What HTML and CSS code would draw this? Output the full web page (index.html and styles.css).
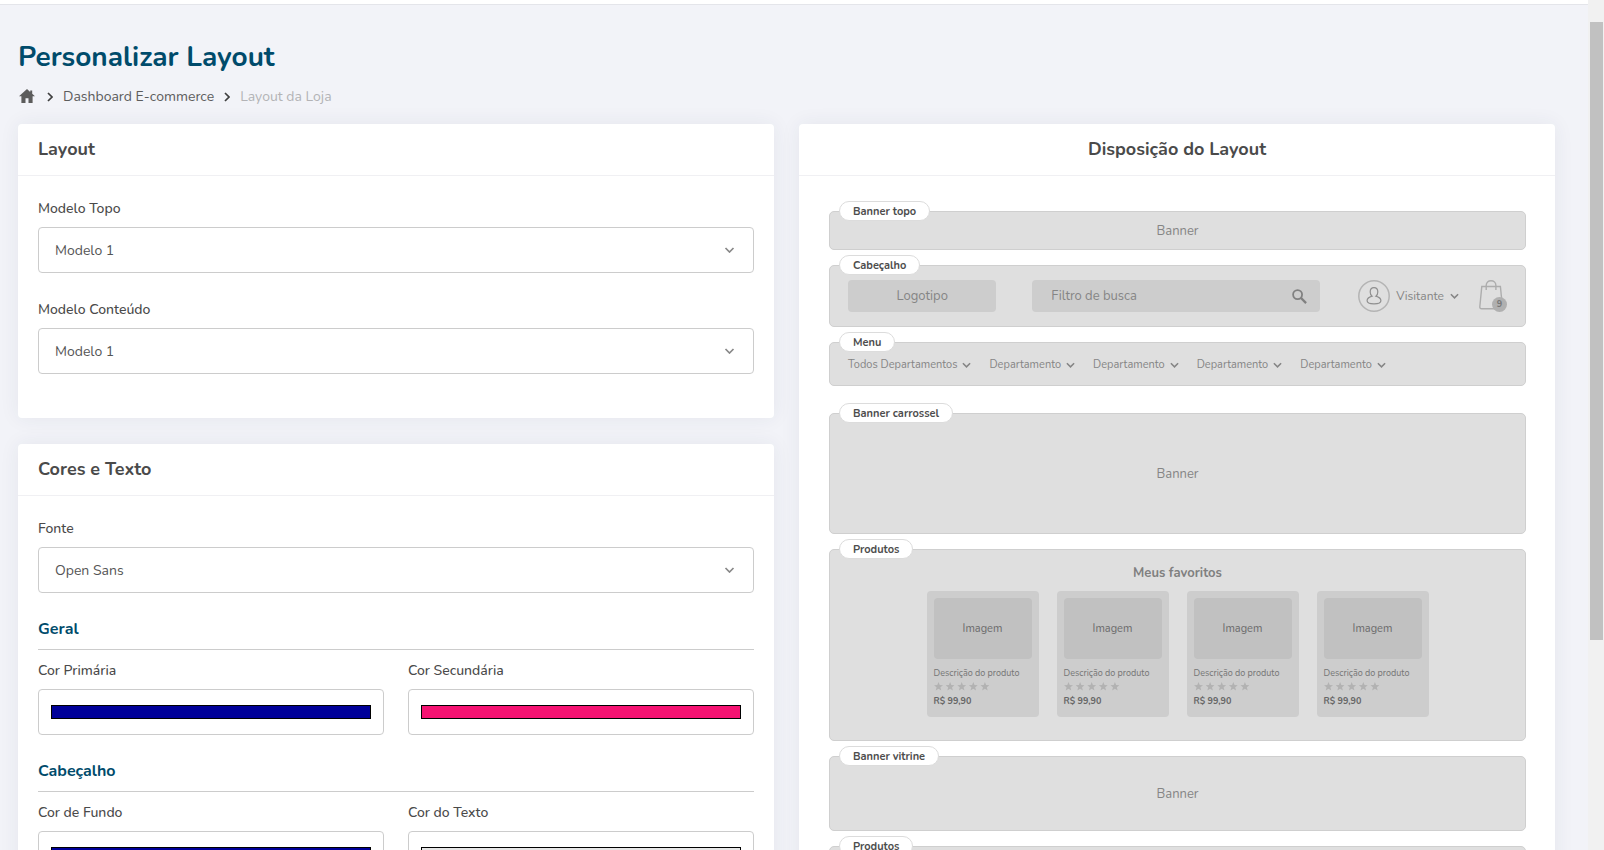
FILE: index.html
```
<!DOCTYPE html>
<html lang="pt-BR">
<head>
<meta charset="utf-8">
<title>Personalizar Layout</title>
<link rel="stylesheet" href="styles.css">
</head>
<body>
<svg class="sprite" aria-hidden="true">
  <symbol id="chevron" viewBox="0 0 10 6"><path d="M1 1l4 4 4-4" fill="none" stroke="currentColor" stroke-width="1.7"/></symbol>
  <symbol id="star" viewBox="0 0 24 24"><path d="M12 0l3.2 8.3 8.800.4-6.900 5.500 2.300 8.600L12 18l-7.400 4.800 2.300-8.600L0 8.700l8.800-.4z" fill="currentColor"/></symbol>
  <symbol id="stars" viewBox="0 0 56 10">
    <use href="#star" x="0" y="0" width="9" height="9"/><use href="#star" x="11.600" y="0" width="9" height="9"/><use href="#star" x="23.200" y="0" width="9" height="9"/><use href="#star" x="34.800" y="0" width="9" height="9"/><use href="#star" x="46.400" y="0" width="9" height="9"/>
  </symbol>
</svg>
<div class="scroll-area">
  <div class="topbar"></div>
  <main class="content">
    <h1 class="page-title">Personalizar Layout</h1>
    <nav class="breadcrumb" aria-label="Navegação">
      <a class="crumb-home" href="#" aria-label="Início"><svg viewBox="0 0 16 14"><path d="M8 0L0 7.200h2.400V14h4.100V9.200h3V14h4.100V7.200H16L13.200 4.700V1.600h-2v1.300z" fill="currentColor"/></svg></a>
      <svg class="crumb-sep" viewBox="0 0 6 10"><path d="M1 1l4 4-4 4" fill="none" stroke="currentColor" stroke-width="1.700"/></svg>
      <a href="#">Dashboard E-commerce</a>
      <svg class="crumb-sep" viewBox="0 0 6 10"><path d="M1 1l4 4-4 4" fill="none" stroke="currentColor" stroke-width="1.700"/></svg>
      <span class="crumb-current">Layout da Loja</span>
    </nav>
    <div class="columns">
      <div class="column">
        <section class="card">
          <h2 class="card-title">Layout</h2>
          <div class="card-body">
            <div class="field">
              <label for="topo">Modelo Topo</label>
              <div class="select-wrap"><select id="topo"><option>Modelo 1</option></select><svg class="select-arrow"><use href="#chevron"/></svg></div>
            </div>
            <div class="field">
              <label for="conteudo">Modelo Conteúdo</label>
              <div class="select-wrap"><select id="conteudo"><option>Modelo 1</option></select><svg class="select-arrow"><use href="#chevron"/></svg></div>
            </div>
          </div>
        </section>
        <section class="card">
          <h2 class="card-title">Cores e Texto</h2>
          <div class="card-body">
            <div class="field">
              <label for="fonte">Fonte</label>
              <div class="select-wrap"><select id="fonte"><option>Open Sans</option></select><svg class="select-arrow"><use href="#chevron"/></svg></div>
            </div>
            <h3 class="group-title">Geral</h3>
            <div class="color-row">
              <div class="field"><label for="c1">Cor Primária</label><input id="c1" type="color" value="#000099"></div>
              <div class="field"><label for="c2">Cor Secundária</label><input id="c2" type="color" value="#f51272"></div>
            </div>
            <h3 class="group-title">Cabeçalho</h3>
            <div class="color-row">
              <div class="field"><label for="c3">Cor de Fundo</label><input id="c3" type="color" value="#000099"></div>
              <div class="field"><label for="c4">Cor do Texto</label><input id="c4" type="color" value="#e6e6e6"></div>
            </div>
          </div>
        </section>
      </div>
      <section class="card preview">
        <h2 class="card-title">Disposição do Layout</h2>
        <div class="blocks">
          <div class="block banner-top"><span class="tag">Banner topo</span>Banner</div>
          <div class="block store-header">
            <span class="tag">Cabeçalho</span>
            <div class="logo-box">Logotipo</div>
            <div class="search-box">Filtro de busca
              <svg class="search-icon" viewBox="0 0 15 15"><circle cx="5.600" cy="5.600" r="4.500" fill="none" stroke="currentColor" stroke-width="1.800"/><path d="M8.900 8.900l5.200 5.200" stroke="currentColor" stroke-width="2.200"/></svg>
            </div>
            <div class="visitor">
              <svg class="avatar" viewBox="0 0 32 32" fill="none"><circle cx="16" cy="16" r="15.200" stroke="#b4b4b4" stroke-width="1.500"/><path d="M16 7.600c2.300 0 3.800 1.900 3.800 4.300 0 1.900-.9 3.500-1.900 4.300 2.900.8 5 2.400 5 4.600 0 2.100-2.900 3.100-6.900 3.100s-6.900-1-6.900-3.100c0-2.200 2.100-3.800 5-4.600-1-.8-1.900-2.400-1.900-4.300 0-2.400 1.500-4.300 3.800-4.300z" stroke="#8f8f8f" stroke-width="1.200"/></svg>
              <span>Visitante</span>
              <svg class="mini-chevron"><use href="#chevron"/></svg>
            </div>
            <div class="bag">
              <svg viewBox="0 0 28 32" fill="none" stroke="#adadad" stroke-width="1.400"><path d="M2.800 6.500h18.600l2 20.300c.1 1.300-.6 2-1.900 2H2.700c-1.300 0-2-.7-1.900-2z"/><path d="M7.200 10V5.600C7.200 2.600 9.300.8 12 .8s4.900 1.800 4.900 4.800V10"/></svg>
              <span class="bag-count">9</span>
            </div>
          </div>
          <div class="block store-menu">
            <span class="tag">Menu</span>
            <span class="menu-item">Todos Departamentos<svg class="mini-chevron"><use href="#chevron"/></svg></span>
            <span class="menu-item">Departamento<svg class="mini-chevron"><use href="#chevron"/></svg></span>
            <span class="menu-item">Departamento<svg class="mini-chevron"><use href="#chevron"/></svg></span>
            <span class="menu-item">Departamento<svg class="mini-chevron"><use href="#chevron"/></svg></span>
            <span class="menu-item">Departamento<svg class="mini-chevron"><use href="#chevron"/></svg></span>
          </div>
          <div class="block carousel"><span class="tag">Banner carrossel</span>Banner</div>
          <div class="block products">
            <span class="tag">Produtos</span>
            <h3 class="products-title">Meus favoritos</h3>
            <div class="product-list">
              <div class="product"><div class="product-image">Imagem</div><div>Descrição do produto</div><svg class="stars"><use href="#stars"/></svg><strong>R$ 99,90</strong></div>
              <div class="product"><div class="product-image">Imagem</div><div>Descrição do produto</div><svg class="stars"><use href="#stars"/></svg><strong>R$ 99,90</strong></div>
              <div class="product"><div class="product-image">Imagem</div><div>Descrição do produto</div><svg class="stars"><use href="#stars"/></svg><strong>R$ 99,90</strong></div>
              <div class="product"><div class="product-image">Imagem</div><div>Descrição do produto</div><svg class="stars"><use href="#stars"/></svg><strong>R$ 99,90</strong></div>
            </div>
          </div>
          <div class="block showcase"><span class="tag">Banner vitrine</span>Banner</div>
          <div class="block carousel"><span class="tag">Produtos</span></div>
        </div>
      </section>
    </div>
  </main>
</div>
<div class="scrollbar" aria-hidden="true"><div class="scroll-thumb"></div></div>
</body>
</html>
```
FILE: styles.css
```
* { box-sizing: border-box; }

body {
  margin: 0;
  height: 100vh;
  display: flex;
  overflow: hidden;
  background: #f2f3f8;
  color: #4a4a4a;
  font: 14px/20px Nunito, "Open Sans", sans-serif;
}

a { color: inherit; text-decoration: none; }
h1, h2, h3 { margin: 0; }
.sprite { position: absolute; width: 0; height: 0; }

.scroll-area {
  flex: 1;
  min-width: 0;
  overflow-y: auto;
  scrollbar-width: none;
}

.scrollbar {
  flex: 0 0 16px;
  padding: 22px 1px 0 2px;
  background: #f1f1f1;
}

.scroll-thumb { height: 75%; max-height: calc(100% - 210px); background: #c1c1c1; }

.topbar {
  height: 5px;
  background: #fff;
  border-bottom: 1px solid #e4e5ea;
}

.content { padding: 34px 33px 26px 18px; }

.page-title {
  color: #004b6b;
  font-size: 28px;
  line-height: 36px;
  font-weight: 700;
}

.breadcrumb {
  display: flex;
  align-items: center;
  gap: 10px;
  padding: 12px 0 17px 1px;
  color: #5c5c5c;
}

.crumb-home { display: flex; padding: 0 2px 2px 0; }
.crumb-home svg { width: 16px; height: 14px; }
.crumb-sep { width: 6px; height: 10px; color: #3f3f3f; }
.crumb-current { color: #b3b3b6; }

.columns {
  display: grid;
  grid-template-columns: 1fr 1fr;
  gap: 25px;
  align-items: start;
}

.column { display: grid; gap: 26px; }

.card {
  background: #fff;
  border-radius: 4px;
  box-shadow: 0 0 20px rgba(40, 50, 80, 0.07);
}

.card-title {
  padding: 13px 20px 14px;
  border-bottom: 1px solid #f0f0f3;
  font-size: 18px;
  line-height: 24px;
  font-weight: 700;
}

.card-body { padding: 22px 20px 18px; }

.field { display: grid; gap: 8px; margin-bottom: 26px; }
.field label { padding-top: 1px; font-weight: 500; }

.select-wrap { position: relative; }

select, input[type="color"] {
  appearance: none;
  display: block;
  width: 100%;
  height: 46px;
  border: 1px solid #ccc;
  border-radius: 4px;
  background: #fff;
}

select {
  padding: 2px 16px 0;
  color: #555;
  font: inherit;
}

.select-arrow {
  position: absolute;
  right: 19px;
  top: 20px;
  width: 11px;
  height: 6px;
  color: #888;
  pointer-events: none;
}

input[type="color"] { padding: 15px 12px; }
input[type="color"]::-webkit-color-swatch-wrapper { padding: 0; }
input[type="color"]::-webkit-color-swatch { border: 1px solid #000; border-radius: 0; }

.group-title {
  padding-bottom: 10px;
  margin-bottom: 10px;
  border-bottom: 1px solid #ccc;
  color: #004b6b;
  font-size: 16px;
  line-height: 20px;
  font-weight: 700;
}

.color-row {
  display: grid;
  grid-template-columns: 1fr 1fr;
  gap: 24px;
}

.preview .card-title { text-align: center; }

.blocks {
  display: grid;
  gap: 15px;
  padding: 35px 29px 30px 30px;
  color: #858585;
  font-size: 13px;
}

.block {
  position: relative;
  display: flex;
  align-items: center;
  justify-content: center;
  border: 1px solid #cfcfcf;
  border-radius: 5px;
  background: #dfdfdf;
}

.tag {
  position: absolute;
  left: 9px;
  top: -11px;
  padding: 1px 13px 0;
  border: 1px solid #dcdcdc;
  border-radius: 10px;
  background: #fff;
  color: #4d4d4d;
  font-size: 11px;
  line-height: 17px;
  font-weight: 700;
  white-space: nowrap;
}

.banner-top { min-height: 39px; }
.carousel { min-height: 121px; }
.showcase { min-height: 75px; }

.store-header {
  display: grid;
  grid-template-columns: 34fr 66fr auto auto;
  gap: 36px;
  padding: 14px 18px;
}

.logo-box, .search-box {
  display: flex;
  align-items: center;
  justify-content: center;
  height: 32px;
  border-radius: 4px;
  background: #cdcdcd;
}

.search-box { justify-content: space-between; padding: 0 13px 0 19px; }
.search-icon { width: 15px; height: 15px; color: #808080; }

.visitor { display: flex; align-items: center; gap: 6px; margin-left: 2px; font-size: 12px; }
.avatar { width: 32px; height: 32px; }
.mini-chevron { width: 9px; height: 6px; }

.bag { position: relative; width: 28px; height: 32px; margin-left: -16px; }
.bag svg { display: block; width: 28px; height: 32px; }

.bag-count {
  position: absolute;
  right: 0;
  bottom: 0;
  width: 15px;
  border-radius: 50%;
  background: #b0b0b0;
  color: #777;
  font-size: 9px;
  line-height: 15px;
  font-weight: 700;
  text-align: center;
}

.store-menu {
  justify-content: flex-start;
  gap: 18px;
  min-height: 44px;
  padding: 1px 18px 0;
  font-size: 11px;
}

.menu-item { display: flex; align-items: center; gap: 5px; }
.store-menu + .block { margin-top: 12px; }

.products { flex-direction: column; padding: 13px 0 23px; }
.products-title { color: #808080; font-size: 13px; line-height: 20px; font-weight: 700; }

.product-list { display: flex; gap: 18px; margin-top: 8px; }

.product {
  width: 112px;
  padding: 7px 7px 9px;
  border-radius: 4px;
  background: #cdcdcd;
  color: #757575;
  font-size: 9px;
  line-height: 14px;
  white-space: nowrap;
}

.product-image {
  display: flex;
  align-items: center;
  justify-content: center;
  height: 61px;
  margin-bottom: 7px;
  border-radius: 4px;
  background: #c1c1c1;
  color: #6b6b6b;
  font-size: 11px;
}

.product strong { display: block; color: #666; }
.stars { display: block; width: 56px; height: 10px; margin: 2px 0; color: #b2b2b2; }
```
